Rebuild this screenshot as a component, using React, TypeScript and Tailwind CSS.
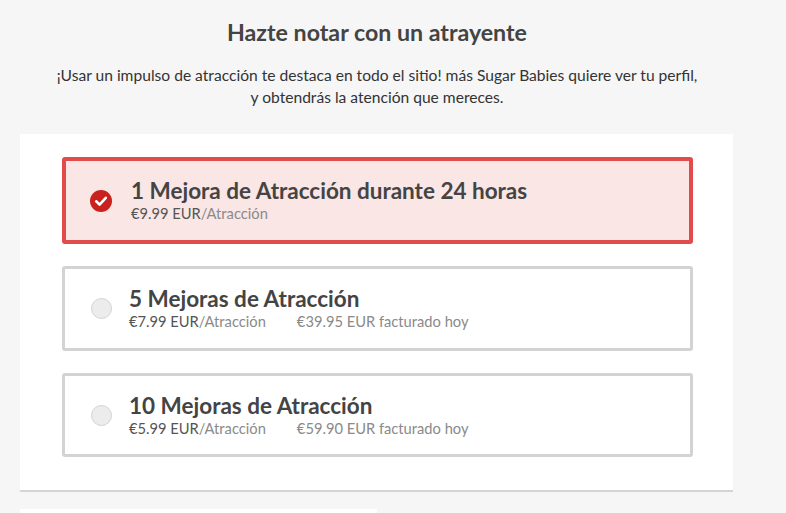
import React from "react";

const font = { fontFamily: "Lato, 'Open Sans', sans-serif" };

function Checked() {
  return (
    <svg width="22" height="22" viewBox="0 0 22 22">
      <circle cx="11" cy="11" r="11" fill="#c9211e" />
      <path d="M6.2 11.3 L9.6 14.6 L15.8 7.8" fill="none" stroke="#fff" strokeWidth="2.6" strokeLinecap="round" strokeLinejoin="round" />
    </svg>
  );
}

function Unchecked() {
  return <div className="w-[21px] h-[21px] rounded-full bg-[#ececec] border border-[#d2d2d2]" />;
}

type Opt = { title: string; price: string; total?: string; selected?: boolean; h: string };

function Card({ o }: { o: Opt }) {
  return (
    <div
      className={
        "w-[631px] flex items-center rounded-[3px] " +
        o.h +
        (o.selected
          ? " border-4 border-[#e14b4b] bg-[#fae6e5] pl-[24px]"
          : " border-[3px] border-[#d3d3d3] bg-white pl-[25px]")
      }
    >
      <div className="w-[22px] flex justify-center">{o.selected ? <Checked /> : <Unchecked />}</div>
      <div className={o.selected ? "ml-[19px] flex flex-col" : "ml-[17px] flex flex-col"}>
        <div className="text-[22.5px] leading-[26px] font-bold text-[#444]">{o.title}</div>
        <div className="text-[14.7px] leading-[19px] flex">
          <span className="text-[#555]">{o.price}</span>
          <span className="text-[#8a8a8a]">/Atracción</span>
          {o.total && <span className="text-[#8a8a8a] ml-[31px]">{o.total}</span>}
        </div>
      </div>
    </div>
  );
}

export default function App() {
  const opts: Opt[] = [
    { title: "1 Mejora de Atracción durante 24 horas", price: "€9.99 EUR", selected: true, h: "h-[87px]" },
    { title: "5 Mejoras de Atracción", price: "€7.99 EUR", total: "€39.95 EUR facturado hoy", h: "h-[85px]" },
    { title: "10 Mejoras de Atracción", price: "€5.99 EUR", total: "€59.90 EUR facturado hoy", h: "h-[84px]" },
  ];
  return (
    <div className="w-[786px] h-[513px] bg-[#f6f6f6] overflow-hidden" style={font}>
      <div className="w-[754px] flex flex-col items-center">
        <h1 className="mt-[18px] text-[23.2px] leading-[28px] font-bold text-[#444]">Hazte notar con un atrayente</h1>
        <p className="mt-[18px] text-[15.6px] leading-[22px] text-[#333] text-center whitespace-nowrap">
          ¡Usar un impulso de atracción te destaca en todo el sitio! más Sugar Babies quiere ver tu perfil,
          <br />y obtendrás la atención que mereces.
        </p>
      </div>
      <div className="ml-[20px] mt-[26px] w-[713px] bg-white border-b-2 border-[#d5d5d5] pt-[23px] pb-[33px] pl-[42px] flex flex-col gap-[22px]">
        {opts.map((o) => (
          <Card key={o.title} o={o} />
        ))}
      </div>
      <div className="ml-[20px] mt-[17px] w-[357px] h-[4px] bg-white" />
    </div>
  );
}
